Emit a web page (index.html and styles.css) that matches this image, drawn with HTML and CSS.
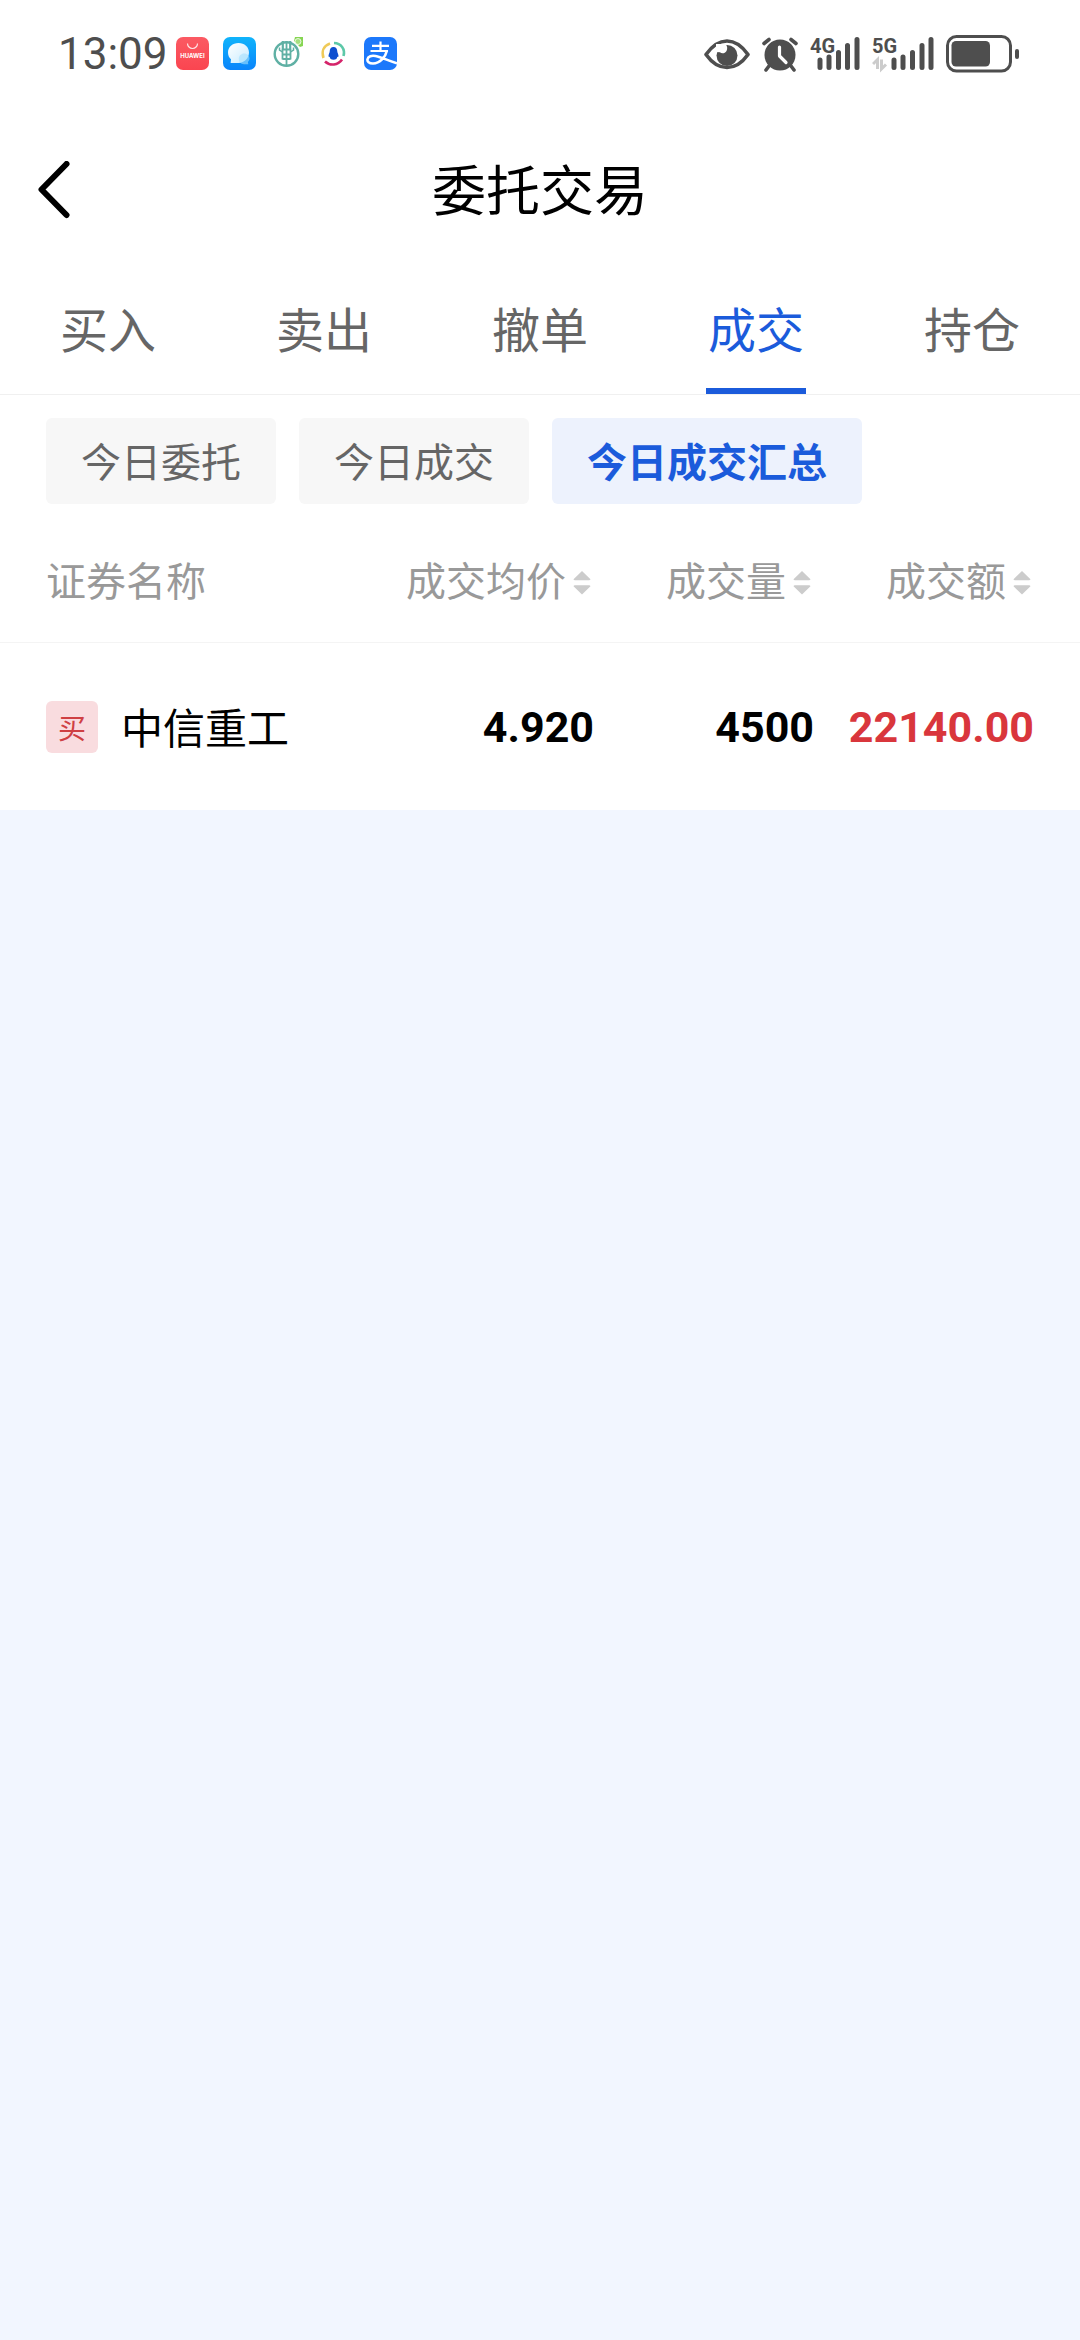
FILE: index.html
```html
<!DOCTYPE html>
<html lang="zh-CN">
<head>
<meta charset="utf-8">
<meta name="viewport" content="width=device-width, initial-scale=1">
<title>委托交易</title>
<link rel="stylesheet" href="styles.css">
</head>
<body>
<div class="status">
  <div class="status-left">
    <time class="clock">13:09</time>
    <svg class="app" viewBox="0 0 33 33" aria-hidden="true">
      <defs><linearGradient id="red" x1="0" y1="0" x2="0" y2="1"><stop offset="0" stop-color="#fb5a63"/><stop offset="1" stop-color="#fa4550"/></linearGradient></defs>
      <rect width="33" height="33" rx="7" fill="url(#red)"/>
      <path d="M11.500 6.500a5 5 0 0 0 10 0" fill="none" stroke="#fff" stroke-opacity=".85" stroke-width="1.200"/>
      <text class="brand" x="16.500" y="21" text-anchor="middle">HUAWEI</text>
    </svg>
    <svg class="app" viewBox="0 0 33 33" aria-hidden="true">
      <defs>
        <linearGradient id="sky" x1="0" y1="0" x2="0" y2="1"><stop offset="0" stop-color="#10b4fb"/><stop offset="1" stop-color="#0a84fb"/></linearGradient>
        <linearGradient id="bubble" x1="0" y1="0" x2="1" y2="1"><stop offset="0" stop-color="#fff"/><stop offset="1" stop-color="#c8ebff"/></linearGradient>
      </defs>
      <rect width="33" height="33" rx="7" fill="url(#sky)"/>
      <path d="M15.500 6C9.500 6 5 10 5 15.500c0 3 1.200 5.200 3 6.800l-.4 3.600h8C21.500 25.900 26 21 26 15.500S21.500 6 15.500 6z" fill="url(#bubble)"/>
      <path d="M21 16.500c3 0 5.500 2.200 5.500 5 0 1.600-.8 2.700-1.600 3.500l.4 2.200H21c-3.200 0-5.200-2.500-5.200-5.400s2.400-5.300 5.200-5.300z" fill="#a5dffd" fill-opacity=".6"/>
    </svg>
    <svg class="app" viewBox="0 0 33 33" aria-hidden="true">
      <g fill="none" stroke="#5fb0a4">
        <circle cx="16.500" cy="17" r="11.800" stroke-width="2.400"/>
        <path d="M12.800 4v8.500h7.400V4" stroke-width="2.200"/>
        <path d="M16.500 4v24" stroke-width="1.800"/>
        <path d="M9.500 10.500v2.500l3 2M23.500 10.500v2.500l-3 2" stroke-width="1.500"/>
        <path d="M12.500 12.500v10M20.500 12.500v10M12.500 17.500h8M12.500 22h8" stroke-width="1.800"/>
      </g>
      <path d="M25 0h8v9l-3 1-6-6z" fill="#86d552"/>
      <circle cx="28" cy="4.500" r="3" fill="#a5df7e" stroke="#fff" stroke-width=".8"/>
    </svg>
    <svg class="app" viewBox="0 0 33 33" aria-hidden="true">
      <g fill="none" stroke-width="2.600">
        <path d="M13 6.500C6 9 4.500 15 6.500 21" stroke="#efca58"/>
        <path d="M17 6c7 .2 11.500 6 9.500 13" stroke="#5cc8a8"/>
        <path d="M8 24.500c5 4.500 13 4 17-2" stroke="#d5246a"/>
      </g>
      <path d="M16.500 10c-2.500 0-3.800 2-3.800 4.500 0 1.200-1.200 2.600-1.200 4.500 0 1 .8 1 1.200.8.100 2 1.500 3 3.800 3s3.700-1 3.800-3c.4.200 1.200.2 1.200-.8 0-1.900-1.200-3.300-1.200-4.500 0-2.500-1.300-4.500-3.800-4.500z" fill="#0d4fd0"/>
    </svg>
    <svg class="app" viewBox="0 0 33 33" aria-hidden="true">
      <rect width="33" height="33" rx="7" fill="#1c78fb"/>
      <g fill="none" stroke="#fff">
        <path d="M8 8.800h17M16.500 4.500v9.500M6.500 14h17.500" stroke-width="2.200"/>
        <path d="M23 13.500C21.500 20 16 26.500 9 26.500c-4 0-6-1.800-5.500-4.300.6-3 4.200-4 8-3.200 6.500 1.300 12 4.500 21.500 7.300" stroke-width="2.600"/>
      </g>
    </svg>
  </div>
  <div class="status-right">
    <svg class="eye" viewBox="0 0 46 38" aria-hidden="true">
      <path d="M2 19.500C8 11 15 6 23 6s15 5 21 13.500C38 28 31 32.500 23 32.500S8 28 2 19.500z" fill="none" stroke="#4e4e4e" stroke-width="3.600" stroke-linejoin="round"/>
      <circle cx="23" cy="20.500" r="10.500" fill="#4e4e4e"/>
      <path d="M12 9h9.500c2 2 2.200 5 1 7-1.500 2.600-5 3-6.500 1.200L12 17z" fill="#fff"/>
    </svg>
    <svg class="alarm" viewBox="0 0 36 38" aria-hidden="true">
      <circle cx="18" cy="20" r="15.500" fill="#4e4e4e"/>
      <path d="M2 8.500l5-4M34 8.500l-5-4M7 31l-3 4M29 31l3 4" stroke="#4e4e4e" stroke-width="3.600" stroke-linecap="round"/>
      <path d="M17.500 12v9l6.500 6.500" fill="none" stroke="#fff" stroke-width="3.200" stroke-linecap="round" stroke-linejoin="round"/>
    </svg>
    <svg class="signal-a" viewBox="0 0 50 38" aria-hidden="true">
      <text class="net" x="0" y="18">4G</text>
      <path d="M10 25v7.500M19 22v10.500M28.500 17.500v15M37.500 10.500v22M47 4.500v28" stroke="#4e4e4e" stroke-width="5" stroke-linecap="round"/>
    </svg>
    <svg class="signal-b" viewBox="0 0 62 38" aria-hidden="true">
      <text class="net" x="0" y="18">5G</text>
      <path d="M5.500 34V24.500L1 29M9.500 24.500V34l4.500-4.500" fill="none" stroke="#ccc" stroke-width="3"/>
      <path d="M22 25v7.500M31 22v10.500M40.500 17.500v15M50 10.500v22M59 4.500v28" stroke="#4e4e4e" stroke-width="5" stroke-linecap="round"/>
    </svg>
    <svg class="battery" viewBox="0 0 73 38" aria-hidden="true">
      <rect x="1.500" y="1.500" width="63" height="34.500" rx="9" fill="none" stroke="#4e4e4e" stroke-width="3"/>
      <rect x="5.500" y="6" width="38.500" height="25.500" rx="4.500" fill="#4e4e4e"/>
      <path d="M71 16v6" stroke="#4e4e4e" stroke-width="4" stroke-linecap="round"/>
    </svg>
  </div>
</div>

<header class="header">
  <button class="back" type="button" aria-label="返回">
    <svg viewBox="0 0 32 58" aria-hidden="true"><path d="M28.500 3L3.500 28.500l25 25.500" fill="none" stroke="#000" stroke-width="6" stroke-linecap="round" stroke-linejoin="round"/></svg>
  </button>
  <h1 class="title">委托交易</h1>
</header>

<nav class="tabs">
  <a class="tab" href="#buy">买入</a>
  <a class="tab" href="#sell">卖出</a>
  <a class="tab" href="#cancel">撤单</a>
  <a class="tab tab-active" href="#deals" aria-current="page">成交</a>
  <a class="tab" href="#positions">持仓</a>
</nav>

<main class="panel">
  <div class="chips">
    <button class="chip" type="button">今日委托</button>
    <button class="chip" type="button">今日成交</button>
    <button class="chip chip-active" type="button" aria-pressed="true">今日成交汇总</button>
  </div>
  <table class="deals">
    <thead>
      <tr>
        <th class="name-col" scope="col">证券名称</th>
        <th class="num-col" scope="col"><button class="sort" type="button">成交均价<svg class="arrows" viewBox="0 0 24 24" aria-hidden="true"><path d="M12 0l8.500 8.200q-.2 1-1.500 1H5q-1.300 0-1.500-1zM12 23.500l8.500-8.200q-.2-1-1.500-1H5q-1.300 0-1.500 1z" fill="#ccc"/></svg></button></th>
        <th class="num-col" scope="col"><button class="sort" type="button">成交量<svg class="arrows" viewBox="0 0 24 24" aria-hidden="true"><path d="M12 0l8.500 8.200q-.2 1-1.500 1H5q-1.300 0-1.500-1zM12 23.500l8.500-8.200q-.2-1-1.500-1H5q-1.300 0-1.500 1z" fill="#ccc"/></svg></button></th>
        <th class="num-col last-col" scope="col"><button class="sort" type="button">成交额<svg class="arrows" viewBox="0 0 24 24" aria-hidden="true"><path d="M12 0l8.500 8.200q-.2 1-1.500 1H5q-1.300 0-1.500-1zM12 23.500l8.500-8.200q-.2-1-1.500-1H5q-1.300 0-1.500 1z" fill="#ccc"/></svg></button></th>
      </tr>
    </thead>
    <tbody>
      <tr>
        <td class="name-col"><div class="stock"><span class="side">买</span><span class="stock-name">中信重工</span></div></td>
        <td class="num-col">4.920</td>
        <td class="num-col">4500</td>
        <td class="num-col last-col amount">22140.00</td>
      </tr>
    </tbody>
  </table>
</main>
</body>
</html>
```
FILE: styles.css
```css
* { box-sizing: border-box; }

body {
  margin: 0;
  background: #f2f6ff;
  color: #000;
  font-family: "Noto Sans CJK SC", sans-serif;
}

button {
  margin: 0;
  padding: 0;
  border: 0;
  background: none;
  color: inherit;
  font: inherit;
  cursor: pointer;
}

svg { display: block; flex: none; }

/* Status bar */
.status {
  display: flex;
  justify-content: space-between;
  align-items: center;
  height: 107px;
  padding: 0 61px 0 58px;
  background: #fff;
}
.status-left { display: flex; align-items: center; gap: 14px; }
.status-right { display: flex; align-items: center; gap: 12px; }
.clock {
  margin-right: -6px;
  font: 400 44px/52px Roboto, sans-serif;
  color: #4e4e4e;
}
.app { width: 33px; height: 33px; }
.brand { font: 700 6px Inter, sans-serif; fill: #fff; }
.net { font: 700 20px Roboto, sans-serif; fill: #4e4e4e; }
.eye { width: 46px; height: 38px; }
.alarm { width: 36px; height: 38px; }
.signal-a { width: 50px; height: 38px; }
.signal-b { width: 62px; height: 38px; }
.battery { width: 73px; height: 38px; }

/* Title bar */
.header {
  display: grid;
  grid-template-columns: 1fr auto 1fr;
  align-items: center;
  height: 166px;
  padding: 0 38px;
  background: #fff;
}
.back { justify-self: start; }
.back svg { width: 32px; height: 58px; }
.title {
  margin: 0;
  padding-bottom: 4px;
  font-size: 54px;
  line-height: 80px;
  font-weight: 400;
}

/* Main tabs */
.tabs {
  display: grid;
  grid-template-columns: repeat(5, 1fr);
  justify-items: center;
  background: #fff;
  border-bottom: 1px solid #f0f0f0;
}
.tab {
  padding: 0 2px 6px;
  border-bottom: 6px solid transparent;
  font-size: 48px;
  line-height: 109px;
  color: #666;
  text-decoration: none;
}
.tab-active { color: #1b5bdb; border-color: #1b5bdb; }

/* Sub-view chips */
.panel { background: #fff; }
.chips { display: flex; gap: 23px; padding: 23px 46px 16px; }
.chip {
  padding: 0 35px 2px;
  border-radius: 6px;
  background: #f7f7f7;
  color: #666;
  font-size: 40px;
  line-height: 84px;
}
.chip-active { background: #edf2fd; color: #1b5bdb; font-weight: 700; }

/* Deals table */
.deals { width: 100%; table-layout: fixed; border-spacing: 0; }
.deals th {
  height: 123px;
  padding: 0 0 4px;
  border-bottom: 1px solid #f4f4f4;
  color: #999;
  font-size: 40px;
  line-height: 58px;
  font-weight: 400;
}
.deals td { height: 167px; padding: 0; }
.deals .name-col { padding-left: 46px; text-align: left; }
.deals .num-col { width: 220px; text-align: right; }
.deals .last-col { width: 266px; padding-right: 46px; }
.deals td.num-col { font: 700 43px/52px Roboto, sans-serif; }
.deals td.amount { color: #d9363c; }

.sort { display: flex; align-items: center; gap: 4px; margin-left: auto; }
.arrows { width: 24px; height: 24px; margin-top: 8px; }

.stock { display: flex; align-items: center; gap: 23px; }
.stock-name { padding-bottom: 2px; font-size: 42px; line-height: 58px; }
.side {
  width: 52px;
  border-radius: 6px;
  background: #f9dcdf;
  color: #cf4043;
  font-size: 28px;
  line-height: 52px;
  text-align: center;
}
```
